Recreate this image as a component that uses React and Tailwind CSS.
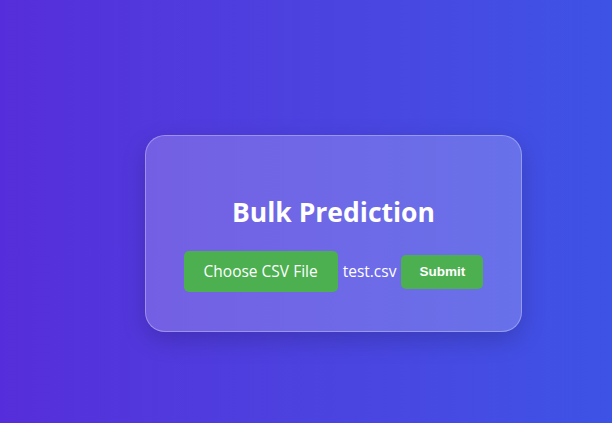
export default function App() {
  return (
    <div className="min-h-[423px] w-full bg-gradient-to-r from-[#562dda] to-[#3d53e6] pl-[145px] pt-[135px] font-['Open_Sans',sans-serif]">
      <div className="w-[377px] h-[197px] rounded-[20px] border border-white/30 bg-white/20 shadow-[0_8px_24px_rgba(0,0,0,0.18)] flex flex-col items-center pt-[58px]">
        <h2 className="text-[26.5px] leading-[36px] font-bold text-white">Bulk Prediction</h2>
        <div className="mt-[21px] flex items-center gap-[5px]">
          <label className="bg-[#4caf50] text-white text-[15.5px] leading-[21px] px-[20px] py-[10px] rounded-[5px]">
            Choose CSV File
          </label>
          <span className="text-white text-[15.5px]">test.csv</span>
          <button className="bg-[#4caf50] text-white text-[13.5px] font-bold font-['Liberation_Sans',sans-serif] leading-[16px] w-[82px] py-[9px] rounded-[5px]">
            Submit
          </button>
        </div>
      </div>
    </div>
  );
}
